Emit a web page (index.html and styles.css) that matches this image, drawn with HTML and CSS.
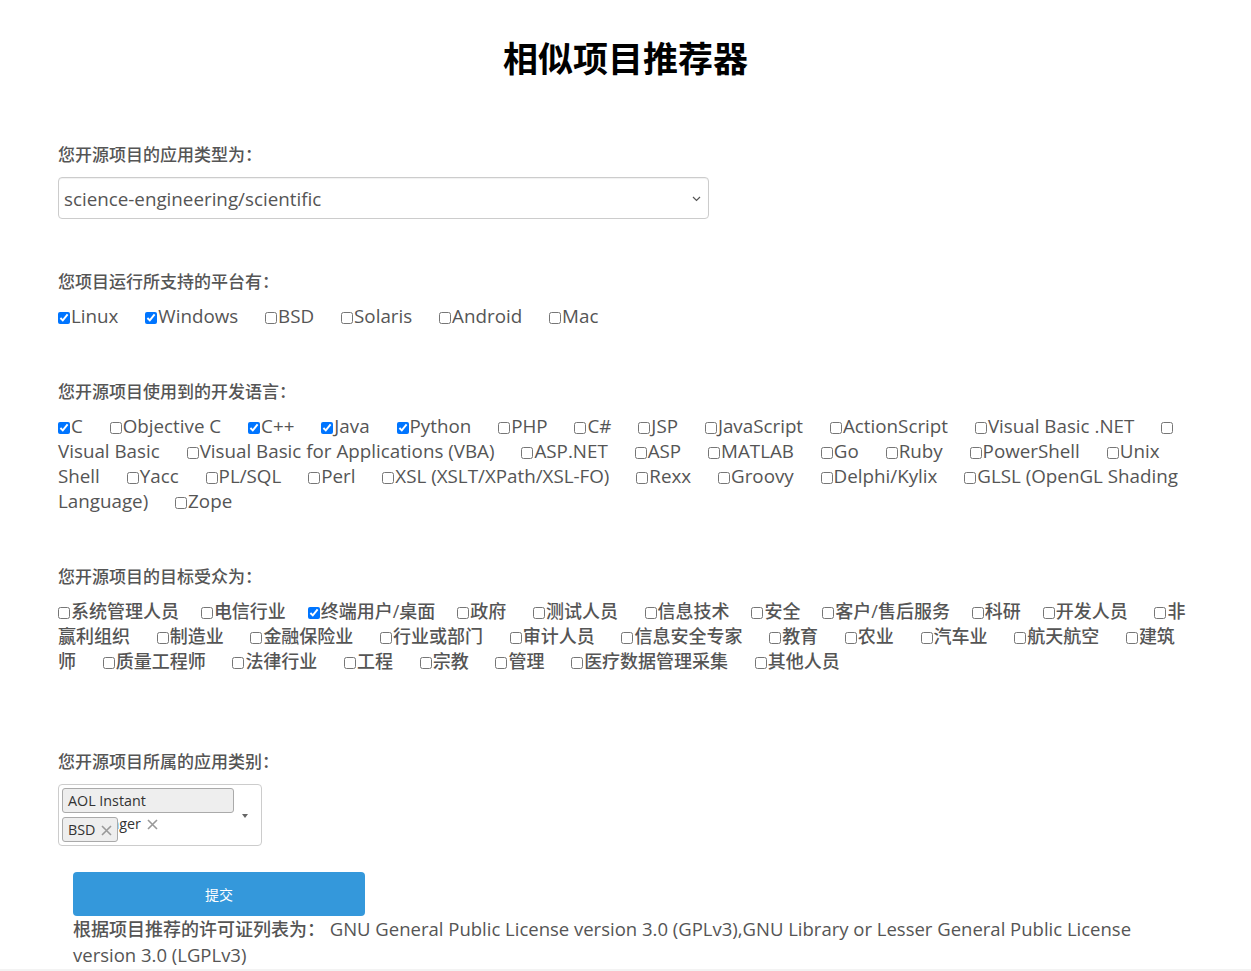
FILE: index.html
```html
<!DOCTYPE html>
<html lang="zh-CN">
<head>
<meta charset="utf-8">
<title>相似项目推荐器</title>
<link rel="stylesheet" href="styles.css">
</head>
<body>
<h1 class="title">相似项目推荐器</h1>
<div class="page">
  <form class="form">
    <section class="group">
      <div class="group-label">您开源项目的应用类型为：</div>
      <div class="select">
        <span class="select-value">science-engineering/scientific</span>
        <svg class="chevron" width="9" height="6" viewBox="0 0 9 6"><polyline points="1,1 4.5,4.5 8,1" fill="none" stroke="#555" stroke-width="1.2"/></svg>
      </div>
    </section>

    <section class="group">
      <div class="group-label">您项目运行所支持的平台有：</div>
      <div class="options options-en">
        <label class="opt"><input type="checkbox" checked>Linux</label>
        <label class="opt"><input type="checkbox" checked>Windows</label>
        <label class="opt"><input type="checkbox">BSD</label>
        <label class="opt"><input type="checkbox">Solaris</label>
        <label class="opt"><input type="checkbox">Android</label>
        <label class="opt"><input type="checkbox">Mac</label>
      </div>
    </section>

    <section class="group">
      <div class="group-label">您开源项目使用到的开发语言：</div>
      <div class="options options-en">
        <label class="opt"><input type="checkbox" checked>C</label>
        <label class="opt"><input type="checkbox">Objective C</label>
        <label class="opt"><input type="checkbox" checked>C++</label>
        <label class="opt"><input type="checkbox" checked>Java</label>
        <label class="opt"><input type="checkbox" checked>Python</label>
        <label class="opt"><input type="checkbox">PHP</label>
        <label class="opt"><input type="checkbox">C#</label>
        <label class="opt"><input type="checkbox">JSP</label>
        <label class="opt"><input type="checkbox">JavaScript</label>
        <label class="opt"><input type="checkbox">ActionScript</label>
        <label class="opt"><input type="checkbox">Visual Basic .NET</label>
        <label class="opt"><input type="checkbox">Visual Basic</label>
        <label class="opt"><input type="checkbox">Visual Basic for Applications (VBA)</label>
        <label class="opt"><input type="checkbox">ASP.NET</label>
        <label class="opt"><input type="checkbox">ASP</label>
        <label class="opt"><input type="checkbox">MATLAB</label>
        <label class="opt"><input type="checkbox">Go</label>
        <label class="opt"><input type="checkbox">Ruby</label>
        <label class="opt"><input type="checkbox">PowerShell</label>
        <label class="opt"><input type="checkbox">Unix Shell</label>
        <label class="opt"><input type="checkbox">Yacc</label>
        <label class="opt"><input type="checkbox">PL/SQL</label>
        <label class="opt"><input type="checkbox">Perl</label>
        <label class="opt"><input type="checkbox">XSL (XSLT/XPath/XSL-FO)</label>
        <label class="opt"><input type="checkbox">Rexx</label>
        <label class="opt"><input type="checkbox">Groovy</label>
        <label class="opt"><input type="checkbox">Delphi/Kylix</label>
        <label class="opt"><input type="checkbox">GLSL (OpenGL Shading Language)</label>
        <label class="opt"><input type="checkbox">Zope</label>
      </div>
    </section>

    <section class="group">
      <div class="group-label">您开源项目的目标受众为：</div>
      <div class="options options-cjk">
        <label class="opt opt-tight"><input type="checkbox">系统管理人员</label>
        <label class="opt opt-tight"><input type="checkbox">电信行业</label>
        <label class="opt opt-tight"><input type="checkbox" checked>终端用户/桌面</label>
        <label class="opt"><input type="checkbox">政府</label>
        <label class="opt"><input type="checkbox">测试人员</label>
        <label class="opt opt-tight"><input type="checkbox">信息技术</label>
        <label class="opt opt-tight"><input type="checkbox">安全</label>
        <label class="opt opt-tight"><input type="checkbox">客户/售后服务</label>
        <label class="opt opt-tight"><input type="checkbox">科研</label>
        <label class="opt"><input type="checkbox">开发人员</label>
        <label class="opt"><input type="checkbox">非赢利组织</label>
        <label class="opt"><input type="checkbox">制造业</label>
        <label class="opt"><input type="checkbox">金融保险业</label>
        <label class="opt"><input type="checkbox">行业或部门</label>
        <label class="opt"><input type="checkbox">审计人员</label>
        <label class="opt"><input type="checkbox">信息安全专家</label>
        <label class="opt"><input type="checkbox">教育</label>
        <label class="opt"><input type="checkbox">农业</label>
        <label class="opt"><input type="checkbox">汽车业</label>
        <label class="opt"><input type="checkbox">航天航空</label>
        <label class="opt"><input type="checkbox">建筑师</label>
        <label class="opt"><input type="checkbox">质量工程师</label>
        <label class="opt"><input type="checkbox">法律行业</label>
        <label class="opt"><input type="checkbox">工程</label>
        <label class="opt"><input type="checkbox">宗教</label>
        <label class="opt"><input type="checkbox">管理</label>
        <label class="opt"><input type="checkbox">医疗数据管理采集</label>
        <label class="opt"><input type="checkbox">其他人员</label>
      </div>
    </section>

    <section class="group group-far">
      <div class="group-label">您开源项目所属的应用类别：</div>
      <div class="multi">
        <ul class="choices">
          <li class="tag tag-first">AOL Instant<br>Messenger <svg class="tag-x" width="11" height="11" viewBox="0 0 11 11"><path d="M1 1 L10 10 M10 1 L1 10" stroke="#999" stroke-width="1.6" fill="none"/></svg></li>
          <li class="tag tag-next">BSD <svg class="tag-x" width="11" height="11" viewBox="0 0 11 11"><path d="M1 1 L10 10 M10 1 L1 10" stroke="#999" stroke-width="1.6" fill="none"/></svg></li>
        </ul>
        <span class="caret"></span>
      </div>
    </section>
  </form>

  <div class="actions">
    <button type="button" class="submit">提交</button>
    <p class="result">根据项目推荐的许可证列表为： <span class="result-en">GNU General Public License version 3.0 (GPLv3),GNU Library or Lesser General Public License version 3.0 (LGPLv3)</span></p>
  </div>
</div>
<div class="footer-bar"></div>
</body>
</html>
```

FILE: styles.css
```css
html, body {
  margin: 0;
  padding: 0;
  background: #fff;
}

body {
  font-family: "Open Sans", "Noto Sans CJK SC", sans-serif;
  font-weight: 500;
  color: #555;
}

.title {
  margin: 0;
  padding-top: 37px;
  font-family: "Noto Sans CJK SC", sans-serif;
  font-size: 35px;
  line-height: 40px;
  font-weight: 700;
  color: #000;
  text-align: center;
}

.page {
  width: 1130px;
  margin-left: 58px;
}

.form {
  margin: 0;
  padding-top: 66px;
}

.group + .group {
  margin-top: 51px;
}

.group.group-far {
  margin-top: 76px;
}

.group-label {
  font-size: 17px;
  line-height: 24px;
  color: #555;
}

.select {
  margin-top: 10px;
  width: 651px;
  height: 42px;
  box-sizing: border-box;
  border: 1px solid #ccc;
  border-radius: 4px;
  display: flex;
  align-items: center;
  justify-content: space-between;
  padding: 1px 7px 0 5px;
  box-shadow: inset 0 1px 1px rgba(0,0,0,0.06);
}

.select-value {
  font-size: 18.8px;
  color: #555;
}

.options {
  margin-top: 10px;
  font-size: 18px;
  line-height: 25px;
}

.options-en {
  font-size: 18.8px;
}

.opt {
  margin-right: 22px;
}

.options-cjk .opt {
  margin-right: 22px;
}

.options-cjk .opt.opt-tight {
  margin-right: 17.2px;
}

.opt input {
  width: 12px;
  height: 12px;
  margin: 0 1px 0 0;
  vertical-align: -1px;
}

.multi {
  position: relative;
  margin-top: 10px;
  width: 204px;
  height: 62px;
  box-sizing: border-box;
  border: 1px solid #ccc;
  border-radius: 4px;
  padding: 3px;
}

.choices {
  list-style: none;
  margin: 0;
  padding: 0;
}

.tag {
  float: left;
  clear: left;
  box-sizing: border-box;
  height: 25px;
  border: 1px solid #aaa;
  border-radius: 3px;
  background: #eee;
  padding: 0 5px;
  font-size: 14.3px;
  line-height: 23px;
  color: #333;
}

.tag-first {
  width: 172px;
  white-space: normal;
}

.tag-next {
  margin-top: 4px;
  background: #eee;
}

.tag-x {
  margin-left: 2px;
  vertical-align: -1px;
}

.caret {
  position: absolute;
  right: 13px;
  top: 29px;
  width: 0;
  height: 0;
  border-top: 4px solid #666;
  border-left: 3px solid transparent;
  border-right: 3px solid transparent;
}

.actions {
  margin-top: 26px;
  padding-left: 15px;
}

.submit {
  display: block;
  width: 292px;
  height: 44px;
  border: none;
  border-radius: 4px;
  background: #3498db;
  color: #fff;
  font-family: "Noto Sans CJK SC", sans-serif;
  font-size: 14px;
  cursor: pointer;
}

.result {
  margin: 0;
  width: 1095px;
  font-size: 18px;
  line-height: 25px;
  color: #555;
}

.result-en {
  font-size: 18.5px;
}

.footer-bar {
  height: 40px;
  margin-top: 1px;
  background: #f3f3f3;
}
```
